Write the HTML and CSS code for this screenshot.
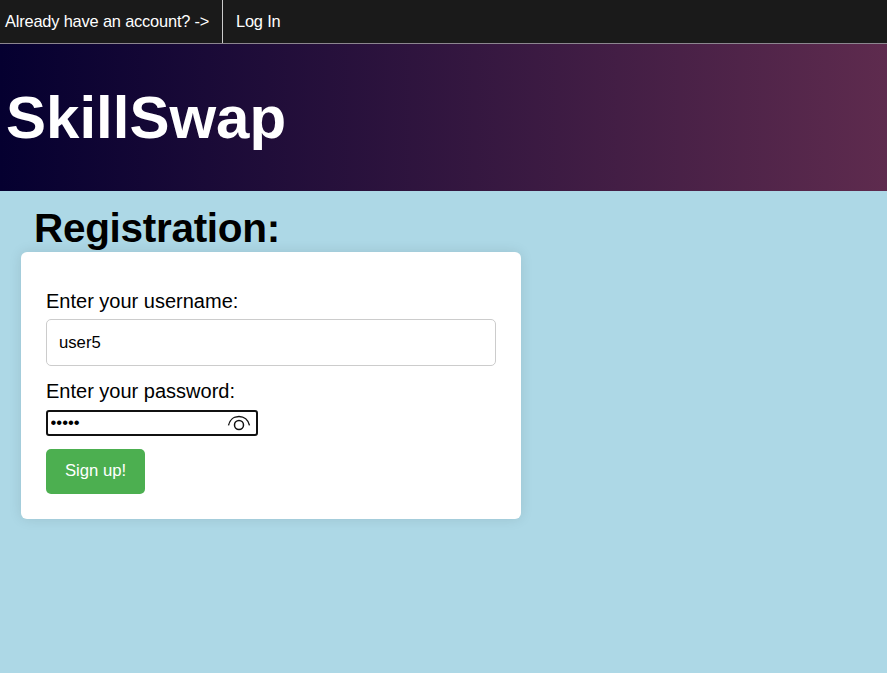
FILE: index.html
```html
<!DOCTYPE html>
<html lang="en">
<head>
<meta charset="utf-8">
<title>SkillSwap</title>
<link rel="stylesheet" href="styles.css">
</head>
<body>
<nav class="nav">
  <span class="nav-note">Already have an account? -&gt;</span>
  <a class="nav-link">Log In</a>
</nav>
<header class="banner"><h1 class="brand">SkillSwap</h1></header>
<main class="content">
  <h2 class="title">Registration:</h2>
  <form class="card">
    <label class="label" for="username">Enter your username:</label>
    <input class="username" id="username" type="text" value="user5">
    <label class="label label-password" for="password">Enter your password:</label>
    <div class="password">
      <input class="password-input" id="password" type="password" value="12345">
      <svg class="eye" viewBox="0 0 24 16" fill="none" stroke="#111">
        <path d="M1.500 10.300C2.800 4.800 7 1.500 12 1.500S21.200 4.800 22.500 10.300" stroke-width="1.400"/>
        <circle cx="12" cy="10" r="4.500" stroke-width="1.500"/>
      </svg>
    </div>
    <button class="submit" type="button">Sign up!</button>
  </form>
</main>
</body>
</html>
```
FILE: styles.css
```css
* { box-sizing: border-box; }
body {
  margin: 0;
  min-height: 100vh;
  background: #add8e6;
  color: #000;
  font-family: "Liberation Sans", Arial, sans-serif;
}
.nav {
  display: flex;
  height: 44px;
  background: #1a1a1a;
  border-bottom: 1px solid #8c868f;
  color: #fff;
  font-size: 16.4px;
  letter-spacing: -0.18px;
  line-height: 43px;
}
.nav-note {
  width: 223px;
  padding-left: 5px;
  border-right: 1px solid #ccc;
  white-space: nowrap;
}
.nav-link { padding-left: 13px; }
.banner {
  height: 147px;
  padding: 39px 6px 0;
  background: linear-gradient(to right, #050030, #5e2b4e);
}
.brand {
  margin: 0;
  color: #fff;
  font-size: 60px;
  line-height: 69px;
}
.content { padding: 14px 21px 0; }
.title {
  margin: 0 0 0 13px;
  font-size: 40.500px;
  letter-spacing: -0.3px;
  line-height: 47px;
}
.card {
  width: 500px;
  height: 267px;
  padding: 37px 25px 25px;
  background: #fff;
  border-radius: 6px;
  box-shadow: 0 0 13px rgba(0, 0, 0, 0.1);
}
.label {
  display: block;
  height: 30px;
  font-size: 20px;
  line-height: 24px;
}
.username {
  display: block;
  width: 450px;
  height: 47px;
  padding: 0 12px;
  border: 1px solid #ccc;
  border-radius: 5px;
  font: 16.700px "Liberation Sans", Arial, sans-serif;
}
.label-password { margin-top: 13px; height: 31px; }
.password {
  display: flex;
  align-items: center;
  width: 212px;
  height: 26px;
  border: 2px solid #111;
  border-radius: 3px;
  padding: 0 5px 0 2.5px;
}
.password-input {
  flex: 1;
  min-width: 0;
  padding: 0 0 1px;
  border: 0;
  outline: 0;
  background: transparent;
  font: 16.700px "Liberation Sans", Arial, sans-serif;
}
.eye { width: 24px; height: 16px; }
.submit {
  display: block;
  width: 99px;
  height: 45px;
  margin-top: 13px;
  padding: 0 0 2px;
  border: 0;
  border-radius: 5px;
  background: #4caf50;
  color: #fff;
  font: 16.700px "Liberation Sans", Arial, sans-serif;
}
```
